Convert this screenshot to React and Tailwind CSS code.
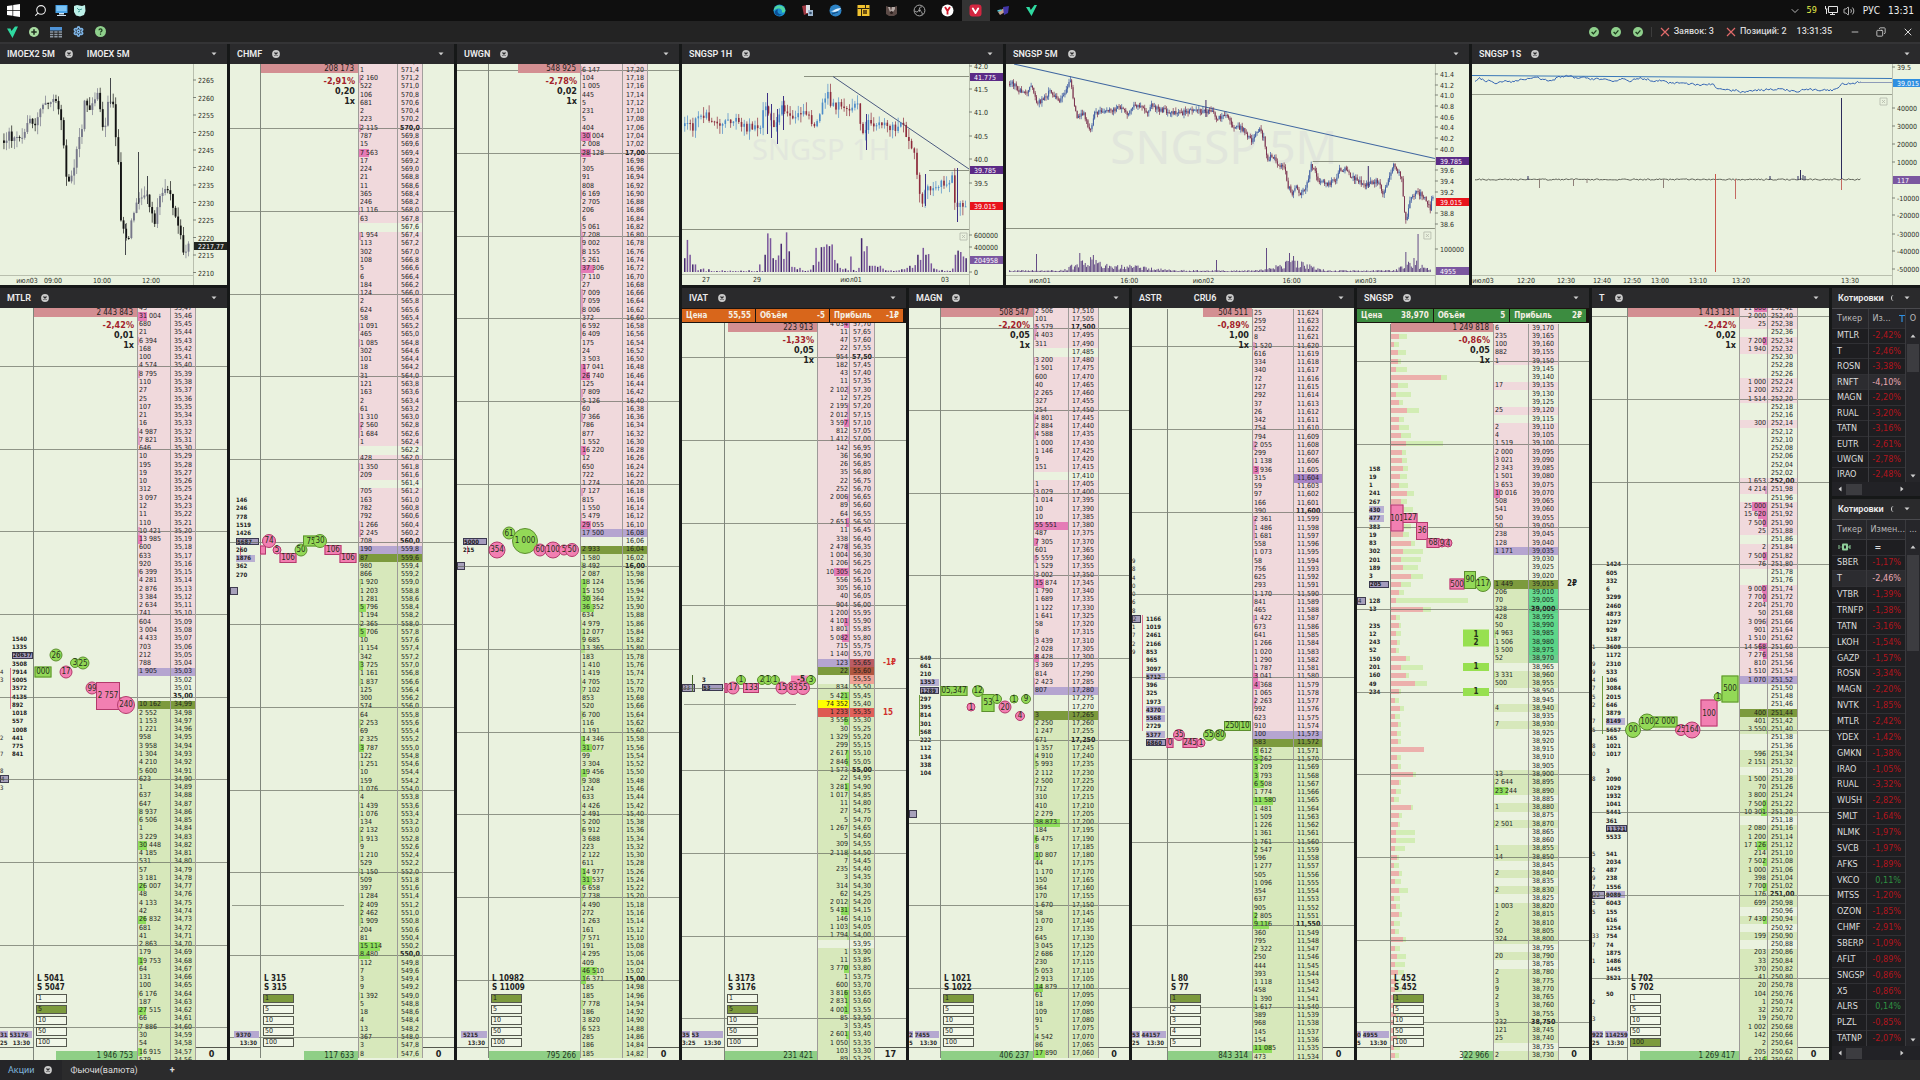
import React from "react";
import { Search, Settings, Volume2, Minus, X, ChevronDown, Copy } from "lucide-react";

const nums = (s) => s.trim().split(/\s+/).map(Number);
const words = (s) => s.trim().split(/\s+/).map((w) => (w === "_" ? "" : w));
const group = (v) => String(v).replace(/\B(?=(\d{3})+$)/g, " ");

/* ---------- order books ---------- */

const BOOKS = {
  mtlr: {
    tabs: [{ name: "MTLR", close: true }],
    cols: "grid-cols-[34px_minmax(0,1fr)_34px_25px_31px]",
    shift: "-mt-1 -mb-1",
    start: 35.47, step: 0.01, digits: 2, line: 10, bold: ["35,00"], ask: 44, bid: 48, full: 105000,
    top: "2 443 843", topW: 100, change: "-2,42%", tick: "0,01", total: "1 946 753", totalW: 79, pos: "0",
    long: "L 5041", short: "S 5047", sizes: ["1", "5", "10", "50", "100"], active: 1,
    volumes: nums(`43 31004 680 21 6394 168 100 4574 8795 110 27 25 107 21 16 4987 7821 646 10 195 19 10 312 3097 12 11 110 10421 13985 600 633 920 6399 4281 2876 3384 2634 741 604 3004 4433 703 212 788 1905 0 0 0 10162 2552 1153 1221 958 3958 1304 4210 5600 623 1 637 647 8937 6506 1 3229 30448 4185 531 57 3181 26007 48 4133 42 26832 681 41 2863 179 19753 64 131 100 6176 187 27515 66 7886 30 54 16915 579`),
    cluster: { at: 40, pad: "pl-3", main: 2, tint: [], line: [4, 8, "bg-[#e0708f]"], values: words("1540 1335 20637 3508 7914 5005 3572 4135 892 1018 557 1008 441 775 841") },
    edge: { 44: "4", 45: "3", 52: "2", 54: "7", 56: "8", 57: "#4", 58: "3" },
    foot: ["31", "53176", "25", "13:30"],
    bubbles: [["r", 44, 9, 17, 11, "000", 1], ["c", 42, 22, 13, 13, "26", 1], ["c", 44, 32, 13, 13, "17", 0], ["c", 43, 41, 10, 10, "3", 1], ["c", 43, 49, 13, 13, "25", 1], ["c", 46, 58, 13, 13, "99", 0], ["r", 47, 74, 24, 28, "2 757", 0], ["c", 48, 92, 18, 18, "240", 0]],
  },
  chmf: {
    tabs: [{ name: "CHMF", close: true }],
    cols: "grid-cols-[31px_minmax(0,1fr)_40px_25px_31px]",
    shift: "-mt-1.5 mb-0.5",
    start: 571.6, step: 0.2, digits: 1, line: 10, bold: ["570,0", "560,0", "550,0"], ask: 59, bid: 60, full: 27500,
    top: "208 173", topW: 100, change: "-2,91%", tick: "0,20", total: "117 633", totalW: 56, pos: "0",
    long: "L 315", short: "S 315", sizes: ["1", "5", "10", "50", "100"], active: 0,
    volumes: nums(`6 1 2160 522 106 681 2 223 2115 787 15 7563 17 224 21 11 365 246 1116 63 0 1954 113 302 108 5 6 184 124 2 624 58 1091 465 1085 302 101 18 31 121 163 2 61 1310 2560 1684 1 0 428 1350 209 0 705 163 782 792 1266 2245 708 190 87 980 866 1920 1203 1281 5796 1194 2365 5706 10 1154 342 3725 1161 1837 125 300 574 64 2253 69 2325 3787 122 1251 10 159 1076 4 1439 1076 134 2132 1913 9 1210 529 1150 509 397 1284 2409 2462 1909 204 81 15114 8480 112 7 3 9 1392 5 18 4 13 367 3 8`),
    cluster: { at: 53, pad: "pl-1.5", main: 5, tint: [7], line: [6, 7, "bg-[#e0708f]"], values: words("146 246 778 1519 1426 5687 260 1876 362 270") },
    edge: { 64: "#" },
    foot: ["", "9370", "", "13:30"], hover: 102,
    bubbles: [["r", 59, 2, 6, 9, "", 0], ["c", 58, 8, 14, 14, "74", 0], ["c", 59, 16, 9, 9, "5", 0], ["r", 60, 27, 17, 10, "106", 0], ["c", 59, 40, 13, 13, "50", 1], ["r", 58, 50, 16, 11, "75", 1], ["c", 58, 59, 14, 14, "30", 1], ["r", 59, 72, 17, 10, "106", 0], ["r", 60, 87, 17, 10, "106", 0]],
  },
  uwgn: {
    tabs: [{ name: "UWGN", close: true }],
    cols: "grid-cols-[32px_minmax(0,1fr)_43px_25px_31px]",
    shift: "-mt-1.5 mb-0.5",
    start: 17.22, step: 0.02, digits: 2, line: 10, bold: ["17,00", "16,00", "15,00"], ask: 57, bid: 59, full: 115000,
    top: "548 925", topW: 68, change: "-2,78%", tick: "0,02", total: "795 266", totalW: 100, pos: "0",
    long: "L 10982", short: "S 11009", sizes: ["1", "5", "10", "50", "100"], active: 0,
    volumes: nums(`6 6147 104 1005 445 5 231 5 404 30004 2008 28128 7 305 91 808 6169 2705 206 6 5061 7208 9002 8155 5261 37306 7110 27 7009 7059 8006 372 6592 6409 175 24 3503 17041 26740 125 7809 5126 60 7366 786 877 1552 16220 12 650 722 1274 7127 815 1550 5479 29055 17500 0 2933 1580 8492 2087 18124 15150 30364 36352 634 4979 12077 9685 13365 183 1410 1419 4705 7102 853 520 6700 116 1191 14346 31077 99 3304 19456 9308 124 633 4426 2491 5200 6912 3688 223 2122 611 14977 31537 6658 7738 4490 272 1263 161 7571 191 4295 409 46510 16371 185 185 7778 186 3820 6523 285 186 185`),
    cluster: { at: 58, pad: "pl-1.5", main: 0, tint: [], line: [1, 1, "bg-[#e0708f]"], values: words("5000 215") },
    edge: { 61: "#" },
    foot: ["", "5215", "", "13:30"],
    bubbles: [["c", 59, 8, 17, 17, "354", 0], ["c", 57, 20, 13, 13, "61", 1], ["c", 58, 36, 26, 26, "1 000", 1], ["c", 59, 51, 13, 13, "60", 0], ["c", 59, 64, 17, 17, "100", 0], ["c", 59, 75, 11, 11, "5", 0], ["c", 59, 83, 14, 14, "50", 0]],
  },
  ivat: {
    tabs: [{ name: "IVAT", close: true }],
    cols: "grid-cols-[43px_minmax(0,1fr)_33px_25px_31px]",
    shift: "-mt-[3px] -mb-1", right: true,
    order: { tone: "bg-[#d8661b]", price: "55,55", size: "-5", gain: "-1₽" },
    start: 57.7, step: 0.05, digits: 2, line: 10, bold: ["57,50", "55,00"], ask: 41, bid: 42, full: 21000,
    top: "223 913", topW: 97, change: "-1,33%", tick: "0,05", total: "231 421", totalW: 100, pos: "17",
    long: "L 3173", short: "S 3176", sizes: ["1", "5", "10", "50", "100"], active: 1,
    volumes: nums(`4034 11 47 22 954 182 43 11 2102 12 2195 2012 3597 812 1412 142 36 26 35 22 252 2006 89 64 2651 11 338 2478 1004 1206 10305 556 305 40 904 1200 4101 1801 5082 715 1140 123 22 0 834 5421 74352 1233 3556 30 1329 299 2617 2846 1573 22 3281 1017 11 27 5 1267 5 309 2118 7 235 3 314 62 2012 5431 146 1103 1794 0 1 11 3770 1 600 3816 2831 4001 85 3 2601 1050 103 89`),
    paint: { 41: ["", "bg-[#bb5c64]"], 42: ["", "bg-[#b0563f]"], 43: ["", "bg-[#efa396]"], 46: ["bg-[#ffff00]", ""], 47: ["bg-[#de5a52]", "bg-[#e0605a]"] },
    side: { 41: "-1₽", 47: "15" },
    cluster: { at: 43, pad: "pl-5", main: 1, tint: [], line: [0, 1, "bg-[#4b6b2f]"], values: words("3 53") },
    edge: { 44: "#33" }, hover: 46,
    foot: ["35", "53", "3:25", "13:30"],
    bubbles: [["c", 43, 16, 10, 10, "1", 1], ["c", 43, 37, 10, 10, "2", 1], ["c", 43, 43, 10, 10, "1", 1], ["c", 43, 50, 10, 10, "1", 1], ["f", 43, 76, 20, 9, "-5", 0], ["c", 43, 86, 10, 10, "3", 1], ["r", 44, 1, 3, 10, "", 0], ["c", 44, 8, 13, 13, "17", 0], ["r", 44, 26, 16, 10, "133", 0], ["c", 44, 57, 13, 13, "15", 0], ["c", 44, 68, 14, 14, "83", 0], ["c", 44, 78, 14, 14, "55", 0]],
  },
  magn: {
    tabs: [{ name: "MAGN", close: true }],
    cols: "grid-cols-[32px_minmax(0,1fr)_36px_30px_30px]",
    shift: "-mt-px mb-0.5",
    start: 17.51, step: 0.005, digits: 3, line: 10, bold: ["17,500", "17,250"], ask: 46, bid: 49, full: 52000,
    top: "508 547", topW: 100, change: "-2,20%", tick: "0,05", total: "406 237", totalW: 100, pos: "0",
    long: "L 1021", short: "S 1022", sizes: ["1", "5", "10", "50", "100"], active: 0,
    volumes: nums(`2506 101 5579 4403 311 0 3200 1501 600 40 2265 327 254 4801 2884 4588 1000 1146 9 151 0 1 3029 1014 10 10 55551 487 7305 601 5559 1529 3002 15874 1790 1689 1122 1641 58 8 3439 2028 8428 3369 814 2423 807 0 0 3 2250 1247 671 1357 4910 5993 2112 2500 712 310 410 2279 38873 184 6475 8 10807 44 1170 150 364 170 1670 58 1070 23 645 3045 2686 230 5053 2913 14879 61 18 109 91 5 4542 86 17890`),
    cluster: { at: 42, pad: "pl-[11px]", main: 4, tint: [3], line: [5, 9, "bg-[#6c9a3c]"], values: words("549 661 210 1353 1289 297 395 814 301 568 222 112 134 338 104") },
    edge: { 61: "#" },
    foot: ["2", "7455", "5", "13:30"],
    bubbles: [["r", 46, 13, 27, 10, "05,347", 1], ["c", 46, 37, 12, 12, "12", 1], ["c", 48, 30, 9, 9, "1", 0], ["r", 47.5, 47, 13, 18, "53", 1], ["c", 47, 56, 10, 10, "1", 1], ["c", 48, 64, 13, 13, "20", 0], ["c", 47, 73, 9, 9, "1", 1], ["c", 49, 79, 10, 10, "4", 0], ["c", 47, 85, 10, 10, "9", 1]],
  },
  cru6: {
    tabs: [{ name: "ASTR", wide: true }, { name: "CRU6", close: true }],
    cols: "grid-cols-[36px_minmax(0,1fr)_42px_29px_31px]",
    shift: "mt-px -mb-px",
    start: 11.624, step: 0.001, digits: 3, line: 10, bold: ["11,600", "11,550"], ask: 51, bid: 52, full: 23000,
    top: "504 511", topW: 58, change: "-0,89%", tick: "1,00", total: "843 314", totalW: 100, pos: "0",
    long: "L 80", short: "S 77", sizes: ["1", "2", "3", "4", "5"], active: 0,
    volumes: nums(`25 259 252 8 1520 616 334 340 72 127 292 37 26 342 754 794 2055 299 1138 3936 315 59 97 166 390 2361 1486 1681 558 1073 58 756 625 293 1170 841 465 1422 673 641 1266 1020 1290 1787 3041 4368 1065 2263 992 623 910 100 583 3612 5262 3209 3793 6508 1774 11580 1481 1509 1226 1361 1761 2547 596 1277 505 1096 354 637 905 2805 9116 360 795 2322 250 444 393 1118 458 1390 1617 389 968 145 154 11085 473`),
    paint: { 20: ["", "bg-[#a883c6]"] },
    cluster: { at: 37, pad: "pl-[14px]", main: 15, tint: [7, 11, 12, 14], line: [0, 13, "bg-[#e0708f]"], values: words("1166 1019 2461 2166 853 965 3097 5712 396 325 1973 4370 5568 2729 5377 6860") },
    edge: { 30: "9", 31: "8", 32: "4", 33: "0", 34: "0", 35: "6", 36: "8", 37: "#2", 38: "1", 39: "7", 40: "2", 41: "9" },
    foot: ["53", "44157", "25", "13:30"],
    bubbles: [["r", 52, 2, 7, 10, "0", 0], ["c", 51, 11, 12, 12, "35", 0], ["r", 52, 22, 15, 10, "245", 0], ["c", 52, 33, 9, 9, "1", 0], ["c", 51, 41, 12, 12, "55", 1], ["c", 51, 52, 12, 12, "80", 1], ["r", 50, 64, 16, 10, "250", 1], ["r", 50, 77, 12, 10, "10", 1]],
  },
  sngsp: {
    tabs: [{ name: "SNGSP", close: true }],
    cols: "grid-cols-[34px_minmax(0,1fr)_36px_30px_30px]",
    shift: "mt-px",
    order: { tone: "bg-[#3c8c40]", price: "38,970", size: "5", gain: "2₽" },
    start: 39.17, step: 0.005, digits: 3, line: 10, bold: ["39,000", "38,750"], ask: 27, bid: 31, full: 55000,
    top: "1 249 818", topW: 100, change: "-0,86%", tick: "0,05", total: "322 966", totalW: 75, pos: "0", clip: true,
    long: "L 452", short: "S 452", sizes: ["1", "5", "10", "50", "100"], active: 0,
    volumes: nums(`6 235 100 882 1 0 0 17 0 0 25 0 2 4 1519 2000 3021 2343 1501 3653 10016 508 541 50 50 238 128 1171 0 0 0 1449 206 70 328 428 50 4963 1506 3500 52 0 3331 500 0 0 4 0 7 0 0 0 0 0 13 2644 23244 0 1 0 2501 0 0 1 14 0 2 0 2 0 1003 2 2 50 324 0 20 0 2 3 9 2 3 3 232 121 25 0 2`),
    paint: { 32: ["", "bg-[#66d98f]"], 33: ["", "bg-[#62d98c]"], 34: ["", "bg-[#5fcf88]"], 35: ["", "bg-[#62d98c]"], 36: ["", "bg-[#5fd98b]"], 37: ["", "bg-[#5ed68a]"], 38: ["", "bg-[#5cd488]"], 39: ["", "bg-[#5cd487]"], 40: ["", "bg-[#6fce8e]"] },
    side: { 31: "2₽" },
    cluster: { at: 17, pad: "pl-3", main: 14, tint: [5, 6], line: null, values: words("158 19 1 241 267 430 477 383 19 83 302 201 189 3 205 _ 128 13 _ 235 12 243 52 150 201 160 49 234") },
    edge: { 33: "#4" },
    foot: ["0", "4955", "5", "13:30"],
    profile: [nums(`60 8 3 7 7 5 50 7 5 8 16 8 8 10 15 11 11 12 9 8 16 10 10 12 11 12 20 12 10 12 20 10 8 5 32 5 8 5 6 5 15 10 15 24 8 4 9 4 7 6 7 33 6 7 22 8 5 3 20 8 7 5 5 4 6 3 8 4 8 3 5 8 3 4 12 4 6 4 7 5 4 6 3 5 7 4 6 3 4`), nums(`0 8 5 8 3 11 6 10 15 4 12 5 10 10 37 4 5 5 7 9 7 6 12 8 9 6 4 20 20 15 12 10 5 72 8 4 2 5 3 3 4 22 3 12 2 4 4 5 3 4 3 0 4 3 3 2 5 5 2 3 2 19 19 10 2 5 3 6 9 6 4 3 6 4 3 5 9 10 6 5 7 4 6 3 5 7 3 6 4`)],
    bubbles: [["r", 23, 6, 13, 27, "101", 0], ["r", 23, 19, 15, 10, "127", 0], ["r", 24.5, 31, 12, 18, "36", 0], ["r", 26, 42, 13, 10, "68", 0], ["c", 26, 51, 9, 9, "9", 0], ["c", 26, 57, 9, 9, "4", 0], ["r", 31, 66, 15, 11, "500", 0], ["r", 30.5, 79, 12, 18, "90", 1], ["c", 31, 92, 16, 16, "117", 1], ["f", 37, 85, 26, 9, "1", 1], ["f", 38, 85, 26, 9, "2", 1], ["f", 41, 85, 26, 8, "1", 1], ["f", 44, 85, 26, 8, "1", 1]],
  },
  t: {
    tabs: [{ name: "T", close: true }],
    cols: "grid-cols-[36px_minmax(0,1fr)_29px_30px_31px]",
    shift: "-mt-1 -mb-[5px]", right: true,
    start: 252.42, step: 0.02, digits: 2, line: 10, bold: ["252,00", "251,00"], ask: 45, bid: 49, full: 45000,
    top: "1 413 131", topW: 100, change: "-2,42%", tick: "0,02", total: "1 269 417", totalW: 89, pos: "0",
    long: "L 702", short: "S 702", sizes: ["1", "5", "10", "50", "100"], active: 4,
    volumes: nums(`21000 2000 25 0 7200 1940 0 0 0 1000 1200 1514 0 0 300 0 0 0 0 0 0 1653 4214 0 25000 15620 7500 25 0 2 7500 76 0 0 9000 7700 2204 50 3096 901 1510 14568 7276 810 1510 1070 0 0 0 400 401 3550 0 0 596 2151 0 1500 70 3800 7500 10301 0 2080 1200 17126 214 7502 1000 398 7700 176 699 0 7430 0 199 0 203 33 370 41 20 104 1 32 19 1002 142 2 205 6216`),
    cluster: { at: 31, pad: "pl-[14px]", main: 32, tint: [19, 40], line: [14, 20, "bg-[#6c9a3c]"], values: words("1424 605 332 6 3299 2460 4873 1297 929 5187 3609 1172 2310 533 106 3084 2015 646 3879 8149 5657 165 1021 1017 _ 3 2090 1029 1932 1041 5441 361 11321 5533 _ 541 2034 487 238 1556 9089 6043 155 616 1254 754 74 1875 1486 1445 3521 _ 50") },
    edge: { 41: "1", 43: "9", 44: "9", 45: "4", 46: "7", 47: "5", 48: "2", 50: "7", 51: "5", 53: "8", 54: "0", 57: "8", 66: "5", 68: "2", 69: "9", 70: "7", 71: "#22", 72: "5", 73: "5", 76: "33", 77: "7", 79: "1", 84: "2", 86: "3" },
    foot: ["922", "114259", "25", "13:30"],
    bubbles: [["c", 51, 5, 16, 16, "00", 1], ["r", 50, 37, 25, 11, "2 000", 1], ["c", 50, 19, 17, 17, "100", 1], ["c", 51, 53, 12, 12, "25", 0], ["c", 51, 64, 17, 17, "164", 0], ["r", 49, 81, 17, 27, "100", 0], ["c", 47, 90, 9, 9, "1", 1], ["r", 46, 102, 17, 27, "500", 1]],
  },
};

function CloseTab({ name }) {
  return (
    <button type="button" aria-label={`Закрыть ${name}`} className="grid size-2 shrink-0 place-items-center">
      <svg viewBox="0 0 8 8" className="size-2">
        <circle cx="4" cy="4" r="3.9" fill="#c9c9c9" />
        <path d="M2.5 2.5l3 3M5.5 2.5l-3 3" stroke="#2a2a2c" strokeWidth="1.2" />
      </svg>
    </button>
  );
}

function TabStrip({ tabs }) {
  return (
    <header className="flex h-5 shrink-0 items-center bg-[#2a2a2c] pr-2.5 pl-[7px] text-[#ececec]">
      {tabs.map((t) => (
        <div key={t.name} className={`flex items-center gap-2.5 ${t.wide ? "mr-8" : "mr-3.5"}`}>
          <button type="button" className="font-['Roboto','Open_Sans',sans-serif] text-[9px] leading-none font-semibold whitespace-nowrap">{t.name}</button>
          {t.close && <CloseTab name={t.name} />}
        </div>
      ))}
      <button type="button" aria-label="Меню панели" className="ml-auto">
        <svg viewBox="0 0 6 4" className="h-1 w-1.5"><path d="M0.5 0.5h5L3 3.2z" fill="#cfcfcf" /></svg>
      </button>
    </header>
  );
}

function OrderStrip({ order }) {
  const cells = [["Цена", order.price], ["Объём", order.size], ["Прибыль", order.gain]];
  return (
    <div className="flex shrink-0 bg-[#1c1510] py-px pr-0.5">
      {cells.map(([k, v]) => (
        <div key={k} className={`mr-px flex h-[13px] min-w-0 flex-1 items-center justify-between px-1 text-[8px] leading-none font-bold text-[#f5efe4] ${order.tone}`}>
          <span>{k}</span>
          <span>{v}</span>
        </div>
      ))}
    </div>
  );
}

function Bubble({ data, count }) {
  const [kind, row, x, w, h, text, up] = data;
  const shape = kind === "c" ? "rounded-full border" : kind === "r" ? "border" : "font-bold";
  const tone = up
    ? kind === "f" ? "bg-[#97e050]" : "border-[#5c8f2e] bg-[#93d957]"
    : kind === "f" ? "bg-[#f587b5]" : "border-[#b33a6c] bg-[#f27fb2]";
  return (
    <span
      className={`absolute flex -translate-x-1/2 -translate-y-1/2 items-center justify-center text-[8px] leading-none whitespace-nowrap text-[#26301c] ${shape} ${tone}`}
      style={{ left: x, top: `${((row + 0.5) / count) * 100}%`, width: w, height: h }}
    >
      {text}
    </span>
  );
}

function rowTone(book, i, v) {
  if (i === book.ask) return "bg-[#b5a5d0]";
  if (i === book.bid) return "bg-[#7c9a3d]";
  if (!v) return "";
  return i < book.ask ? "bg-[#f0d9dc]" : "bg-[#d7e8bb]";
}

function Row({ book, i, v }) {
  const price = (book.start - i * book.step).toFixed(book.digits).replace(".", ",");
  const ticks = Math.round((book.start - i * book.step) / book.step);
  const tone = rowTone(book, i, v);
  const paint = (book.paint && book.paint[i]) || ["", ""];
  const c = book.cluster;
  const k = i - c.at;
  const cv = c.values[k];
  const edge = book.edge[i];
  const bold = book.bold.includes(price);
  const special = i === book.ask || i === book.bid || paint[0];
  const size = Math.min(100, (v / book.full) * 100);
  const barTone = i < book.ask ? (size > 12 ? "bg-[#e57bb6]" : "bg-[#dfa0c6]") : size > 12 ? "bg-[#8fde5c]" : "bg-[#b4e08c]";
  const side = book.side && book.side[i];
  return (
    <div className={`relative grid min-h-0 flex-1 text-[7px] leading-none text-[#1c1c1c] ${book.cols}`}>
      <div className="relative flex items-center">
        {edge !== undefined && (
          <span className={`absolute left-0 text-[6px] ${edge[0] === "#" ? "border border-[#3f3c50] bg-[#a7a1bb] pr-1 text-[#2b2b2b]" : ""}`}>{edge.replace("#", "") || "\u00a0"}</span>
        )}
        {c.line && k >= c.line[0] && k <= c.line[1] && <span className={`absolute inset-y-0 left-2.5 w-px ${c.line[2]}`} />}
        {cv !== undefined && cv !== "" && (
          <span className={`relative flex h-full flex-1 items-center text-[6px] font-semibold ${c.pad}`}>
            <span className={`flex h-[7px] items-center ${k === c.main ? "mr-0.5 flex-1 border border-[#3b3950] bg-[#a49bbd]" : c.tint.includes(k) ? "bg-[#b9b0d2] pr-1" : ""}`}>{cv}</span>
          </span>
        )}
      </div>
      <div className="relative">
        {book.profile && (
          <div className="flex h-full items-center">
            <span className="h-[5px] bg-[#ecb0ac]" style={{ width: book.profile[0][i] }} />
            <span className="h-[5px] bg-[#d2edb4]" style={{ width: book.profile[1][i] }} />
          </div>
        )}
      </div>
      <div className={`relative flex items-center overflow-hidden px-0.5 ${book.right ? "justify-end" : ""} ${paint[0] || tone}`}>
        {!special && v > 0 && <span className={`absolute inset-y-0 ${book.right ? "right-0" : "left-0"} ${barTone}`} style={{ width: `${size}%` }} />}
        <span className="relative whitespace-nowrap">{v ? group(v) : ""}</span>
      </div>
      <div className={`flex items-center whitespace-nowrap ${bold ? "pl-0.5 font-bold" : "pl-[3px]"} ${paint[1] || tone}`}>{price}</div>
      <div className={`flex items-center pl-2 text-[8px] font-bold ${book.right ? "text-[#d0302c]" : ""}`}>{side}</div>
      {ticks % book.line === 0 && <span className="absolute inset-x-0 top-1/2 h-px bg-[#5d6257]/65" />}
      {book.hover === i && <span className="absolute top-1/2 left-0.5 h-px w-1/2 bg-[#5d6257]/60" />}
    </div>
  );
}

function Sizes({ book }) {
  return (
    <div className="ml-0.5 flex w-[31px] flex-col">
      <p className="pl-px text-[8px] leading-[9px] font-bold whitespace-nowrap text-[#222]">{book.long}</p>
      <p className="mb-0.5 pl-px text-[8px] leading-[9px] font-bold whitespace-nowrap text-[#222]">{book.short}</p>
      <div className="flex flex-col gap-0.5">
        {book.sizes.map((s, n) => (
          <button key={s} type="button" className={`flex h-[9px] items-center border border-[#55584e] pl-px text-left text-[7px] leading-none text-[#1c1c1c] ${n === book.active ? "bg-[#7c9a3d]" : "bg-[#f1f7e8]"}`}>{s}</button>
        ))}
      </div>
    </div>
  );
}

function Book({ book }) {
  const n = book.volumes.length;
  const strip = book.order;
  return (
    <section className="flex min-h-0 min-w-0 flex-col overflow-hidden">
      <TabStrip tabs={book.tabs} />
      {strip && <OrderStrip order={strip} />}
      <div className="relative flex min-h-0 flex-1 flex-col overflow-hidden bg-[#eaf2df]">
        <div className={`relative flex min-h-0 flex-1 flex-col ${book.shift}`}>
          {book.volumes.map((v, i) => <Row key={i} book={book} i={i} v={v} />)}
          <div className={`pointer-events-none absolute inset-0 grid ${book.cols}`}>
            <div className="border-r border-[#7e857a]" />
            <div className="relative">{book.bubbles.map((b, k) => <Bubble key={k} data={b} count={n} />)}</div>
            <div className="border-x border-[#9d9a98]" />
            <div className="border-r border-[#a39f9d]" />
          </div>
        </div>
        <div className={`absolute inset-0 grid ${book.cols}`}>
          <div className="flex min-w-0 flex-col justify-end overflow-hidden text-[6px] leading-[7px] font-semibold text-[#2b2b2b]">
            <div className="mr-0.5 flex gap-0.5">
              {book.foot[0] && <span className="bg-[#b5a8d0]">{book.foot[0]}</span>}
              <span className={`flex-1 bg-[#b5a8d0] ${book.foot[0] ? "" : "ml-1 pl-0.5"}`}>{book.foot[1]}</span>
            </div>
            <div className="mt-px mr-1 flex justify-between"><span>{book.foot[2]}</span><span>{book.foot[3]}</span></div>
            <div className="mt-px h-[13px] border-t border-[#6a6e64]" />
          </div>
          <div className="flex min-w-0 flex-col justify-between">
            <div className="flex flex-col items-end leading-none text-[#222]">
              <div className="flex h-[9px] items-center justify-end bg-[#d38f92] pr-1 text-[8px]" style={{ width: `${book.topW}%` }}>{book.top}</div>
              <span className="mt-[3px] pr-[3px] text-[9px] leading-[10px] font-bold text-[#a3232b]">{book.change}</span>
              <span className="pr-[3px] text-[9px] leading-[10px] font-bold">{book.tick}</span>
              <span className="pr-[3px] text-[9px] leading-[10px] font-bold">1x</span>
            </div>
            <div className="flex flex-col gap-1">
              <Sizes book={book} />
              <div className={`flex h-[9px] items-center justify-end self-end pr-1 text-[8px] leading-none text-[#22361f] ${book.clip ? "bg-linear-to-r from-[#8fcf86]/0 from-60% to-[#8fcf86] to-60%" : "bg-[#8fcf86]"}`} style={{ width: `${book.totalW}%` }}>{book.total}</div>
            </div>
          </div>
          <div />
          <div />
          <div className="flex flex-col justify-end">
            <div className="h-[13px] border-t border-[#55584e] text-center text-[9px] leading-3 font-bold text-[#222]">{book.pos}</div>
          </div>
        </div>
      </div>
    </section>
  );
}

/* ---------- charts ---------- */

const noise = (i) => {
  const s = Math.sin(i * 127.1 + 11.7) * 43758.5453;
  return s - Math.floor(s);
};

const pairs = (s) => s.trim().split(/\s+/).map((p) => p.split(",").map(Number));

function sampler(points) {
  return (x) => {
    const i = points.findIndex((p) => p[0] >= x);
    if (i <= 0) return points[i === 0 ? 0 : points.length - 1][1];
    const [x0, y0] = points[i - 1];
    const [x1, y1] = points[i];
    return y0 + ((y1 - y0) * (x - x0)) / (x1 - x0);
  };
}

function Candles({ points, step, width, jitter, wick, up, down }) {
  const at = sampler(points);
  const out = [];
  const end = points[points.length - 1][0];
  for (let x = points[0][0], i = 0; x <= end; x += step, i++) {
    const a = at(x) + (noise(i) - 0.5) * jitter;
    const b = at(x + step) + (noise(i + 1) - 0.5) * jitter;
    const fill = b > a ? down : up;
    out.push(
      <g key={i} fill={fill}>
        <rect x={x} y={Math.min(a, b)} width={width} height={Math.max(1, Math.abs(b - a))} />
        <rect x={x + width / 2 - 0.35} y={Math.min(a, b) - noise(i + 50) * wick} width="0.7" height={Math.abs(b - a) + (noise(i + 50) + noise(i + 90)) * wick} />
      </g>
    );
  }
  return <g>{out}</g>;
}

function Axis({ x, width, labels, tags, times, floor, height }) {
  return (
    <g fontSize="7" fill="#2a2d26" fontFamily="'DejaVu Sans Condensed','Noto Sans',sans-serif">
      <path d={`M${x + 0.5} 0V${height}M0 ${floor + 0.5}H${x}`} stroke="#b9bfae" strokeWidth="1" />
      {labels.map(([t, y]) => (
        <g key={t}>
          <path d={`M${x} ${y}h3`} stroke="#7d8276" />
          <text x={x + 5} y={y + 3}>{t}</text>
        </g>
      ))}
      {tags.map(([t, y, c]) => (
        <g key={t}>
          <rect x={x + 1} y={y - 4} width={width - x - 1} height="8" fill={c} />
          <text x={x + 5} y={y + 3} fill="#fff">{t}</text>
        </g>
      ))}
      {times.map(([t, tx]) => <text key={t + tx} x={tx} y={floor + 8} textAnchor="middle">{t}</text>)}
    </g>
  );
}

function ChartPanel({ tabs, width, children, label }) {
  return (
    <section className="flex min-h-0 min-w-0 flex-col overflow-hidden">
      <TabStrip tabs={tabs} />
      <div className="min-h-0 flex-1 bg-[#eaf2df]">
        <svg role="img" aria-label={label} viewBox={`0 0 ${width} 221`} preserveAspectRatio="none" className="block size-full">{children}</svg>
      </div>
    </section>
  );
}

const IMOEX = pairs("3,75 7,79 11,70 15,76 20,72 27,69 30,50 36,62 41,44 50,39 59,37 63,59 66,83 68,115 72,116 75,108 79,77 83,74 86,36 92,45 96,38 100,27 103,57 106,73 110,34 115,43 117,70 120,101 122,156 126,170 130,173 134,149 138,143 139,125 142,139 147,129 151,139 156,160 160,139 166,124 173,134 178,160 183,173 186,197 189,180");
const H1 = pairs("2,60 6,56 11,65 16,56 21,48 26,50 31,55 45,58 58,58 65,63 75,63 80,60 85,43 89,50 95,63 98,60 101,40 106,50 111,55 123,51 131,56 136,58 141,43 147,29 151,43 156,41 161,39 166,50 171,44 178,43 181,63 184,80 188,56 193,63 201,60 211,63 223,63 228,74 235,91 238,122 243,139 246,118 251,124 260,117 268,125 272,115 275,142 278,142 281,132 284,143");
const H1_VOL = nums("40 93 50 22 22 5 8 10 2 8 3 2 3 2 5 3 2 4 2 3 2 4 3 2 5 3 2 3 22 3 50 112 98 40 35 48 82 38 115 60 15 14 8 12 5 3 4 7 20 70 30 72 73 80 75 80 35 25 12 8 10 5 45 6 3 12 98 60 75 18 18 18 15 18 10 5 4 5 3 4 5 8 8 12 18 12 20 50 35 70 50 52 25 10 8 4 6 3 4 3 10 50 62 58 45 40");
const M5 = pairs("3,19 9,20 14,26 21,27 27,22 31,39 37,36 45,27 54,38 61,27 65,17 69,39 72,53 79,50 85,69 89,50 97,48 107,46 117,43 122,50 129,39 141,48 146,42 154,45 171,50 184,47 197,48 207,46 210,55 221,51 227,62 237,65 246,76 254,65 259,77 261,94 267,93 274,101 279,105 282,122 287,129 291,122 295,132 301,120 306,100 312,115 321,120 329,117 334,106 341,106 346,113 359,122 371,117 377,129 384,112 388,101 396,115 399,153 401,156 404,136 409,129 416,131 421,136 424,146 426,132");
const S1 = pairs("3,17 8,14 13,17 18,16 23,19 35,17 40,18 46,16 56,15 66,13 68,16 83,16 85,13 98,12 105,15 111,13 118,15 135,15 141,17 150,15 158,17 168,14 181,17 191,17 198,19 205,19 215,20 220,20 228,21 241,20 245,25 255,25 258,27 265,26 268,28 288,26 306,25 315,26 328,28 331,25 345,26 351,26 363,26 370,20 378,20 386,18 389,19");

function wiggle(points, step, amp) {
  const at = sampler(points);
  let d = "";
  const end = points[points.length - 1][0];
  for (let x = points[0][0], i = 0; x <= end; x += step, i++) d += `${i ? "L" : "M"}${x} ${(at(x) + (noise(i) - 0.5) * amp).toFixed(1)}`;
  return d;
}

function CloseBox({ x, y }) {
  return <path d={`M${x} ${y}h7v7h-7zM${x + 2} ${y + 2}l3 3m0-3l-3 3`} fill="none" stroke="#b3b8aa" strokeWidth="0.8" />;
}

function ImoexChart() {
  return (
    <ChartPanel width={227} label="IMOEX2 5M" tabs={[{ name: "IMOEX2 5M", close: true }, { name: "IMOEX 5M" }]}>
      <Axis x={193} width={227} floor={211} height={221}
        labels={Array.from({ length: 12 }, (_, i) => [String(2265 - 5 * i), 16 + 17.5 * i])}
        tags={[["2217,77", 182, "#22261f"]]}
        times={[["июл03", 27], ["09:00", 53], ["10:00", 102], ["12:00", 151]]} />
      <Candles points={IMOEX} step={2.6} width={1.9} jitter={7} wick={10} up="#77788a" down="#141414" />
      <path d="M138.500 88V140M110.500 14V40M147.500 112V140M125.500 160V191" stroke="#44464a" />
    </ChartPanel>
  );
}

function HourChart() {
  return (
    <ChartPanel width={321} label="SNGSP 1H" tabs={[{ name: "SNGSP 1H", close: true }]}>
      <text x="70" y="96" fontSize="29" fill="#e2e7dd" fontFamily="'Noto Sans',sans-serif">SNGSP 1H</text>
      <path d="M0 165.500H287M122 12.500H287M247 106.500H287" stroke="#8b9180" strokeWidth="1" />
      <path d="M151 12.500L287 105" stroke="#4b5a80" strokeWidth="1" fill="none" />
      <Candles points={H1} step={2.7} width={1.6} jitter={10} wick={9} up="#4d8cc9" down="#8e2c3c" />
      <path d="M85.500 29V70M89.500 40V74M95.500 45V80M101.500 32V66M184.500 50V86M243.500 110V142M275.500 104V158" stroke="#3c2f86" />
      {H1_VOL.map((h, i) => <rect key={i} x={2 + i * 2.68} y={208 - h / 2.9} width="1.5" height={h / 2.9} fill={i % 3 ? "#7a569c" : "#46286f"} />)}
      <CloseBox x={278} y={169} />
      <Axis x={287} width={321} floor={210} height={221}
        labels={[["42.0", 2], ["41.5", 25], ["41.0", 48], ["40.5", 72], ["40.0", 95], ["39.5", 119], ["600000", 171], ["400000", 183], ["0", 208]]}
        tags={[["41.775", 13, "#5b2a86"], ["39.785", 106, "#5b2a86"], ["39.015", 142, "#e8141c"], ["204958", 196, "#7b57a0"]]}
        times={[["27", 24], ["29", 75], ["июл01", 169], ["03", 263]]} />
    </ChartPanel>
  );
}

function FiveChart() {
  const spikes = { 20: 18, 52: 19, 62: 17, 153: 12, 190: 24, 207: 19, 210: 16, 293: 20, 299: 14, 302: 38, 313: 18, 315: 12 };
  return (
    <ChartPanel width={462} label="SNGSP 5M" tabs={[{ name: "SNGSP 5M", close: true }]}>
      <text x="104" y="100" fontSize="46" fill="#e1e6dc" fontFamily="'Noto Sans',sans-serif">SNGSP 5M</text>
      <path d="M0 164.500H428M306 97.500H428" stroke="#8b9180" strokeWidth="1" />
      <path d="M8 0L428 94.500" stroke="#3f66a0" strokeWidth="1" />
      <Candles points={M5} step={1.35} width={0.9} jitter={5} wick={4} up="#3b58a0" down="#7a2f4d" />
      <path d="M199.500 36V53M361.500 102V124" stroke="#3c2a6a" />
      {Array.from({ length: 312 }, (_, i) => {
        const x = 3 + i * 1.35;
        const near = Math.exp(-(((x - 80) / 16) ** 2)) * 9 + Math.exp(-(((x - 287) / 20) ** 2)) * 8 + Math.exp(-(((x - 405) / 12) ** 2)) * 8 + Math.exp(-(((x - 120) / 30) ** 2)) * 4 + 1.4;
        const h = spikes[i] || near * (0.4 + noise(i + 300));
        return <rect key={i} x={x} y={208 - h} width="0.9" height={h} fill="#56397c" />;
      })}
      <CloseBox x={417} y={168} />
      <Axis x={428} width={462} floor={211} height={221}
        labels={[["41.4", 10], ["41.2", 21], ["41.0", 31], ["40.8", 42], ["40.6", 53], ["40.4", 63], ["40.2", 74], ["40.0", 85], ["39.6", 106], ["39.4", 117], ["39.2", 128], ["38.8", 149], ["38.6", 160], ["100000", 185]]}
        tags={[["39.785", 97, "#5b2a86"], ["39.015", 138, "#e8141c"], ["4955", 207, "#7b57a0"]]}
        times={[["июл01", 34], ["16:00", 123], ["июл02", 197], ["16:00", 285], ["июл03", 359]]} />
    </ChartPanel>
  );
}

function SecondChart() {
  return (
    <ChartPanel width={448} label="SNGSP 1S" tabs={[{ name: "SNGSP 1S", close: true }]}>
      <path d="M0 30.500H420" stroke="#9aa08f" />
      <path d="M0 11.500L420 14.500" stroke="#3a78b8" />
      <path d={wiggle(S1, 1.5, 2)} fill="none" stroke="#3566b4" />
      <path d="M387 18.500H420" stroke="#8d9bb8" />
      <path d={wiggle([[3, 115.5], [389, 115.5]], 1.5, 1.4)} fill="none" stroke="#55584e" strokeWidth="0.9" />
      <path d="M67.500 115V124M101.500 115V122M191.500 115V124M115 115V119" stroke="#8e7f78" />
      <path d="M243.500 110V208" stroke="#c8564c" />
      <path d="M263.500 115V135M369.500 115V126" stroke="#c46a62" />
      <path d="M369.500 34V115M328.500 106V116M326 112V116M331 111V116M333 112V116M298 112V116M56 112V116" stroke="#2d2c5c" />
      <CloseBox x={408} y={34} />
      <Axis x={420} width={448} floor={211} height={221}
        labels={[["39.5", 3], ["40000", 44], ["30000", 62], ["20000", 80], ["10000", 98], ["-10000", 134], ["-20000", 151], ["-30000", 170], ["-40000", 187], ["-50000", 205]]}
        tags={[["39.015", 19, "#2f8fe0"], ["117", 116, "#7b57a0"]]}
        times={[["июл03", 11], ["12:20", 54], ["12:30", 94], ["12:40", 130], ["12:50", 160], ["13:00", 188], ["13:10", 226], ["13:20", 269], ["13:30", 378]]} />
    </ChartPanel>
  );
}

/* ---------- quotes ---------- */

function quoteRows(s) {
  const w = s.split(" ");
  const out = [];
  for (let i = 0; i < w.length; i += 2) out.push([w[i], w[i + 1] + "%"]);
  return out;
}

const TOP_QUOTES = quoteRows("MTLR -2,42 T -2,46 ROSN -3,38 RNFT -4,10 MAGN -2,20 RUAL -3,20 TATN -3,16 EUTR -2,61 UWGN -2,78 IRAO -2,48");
const QUOTES = quoteRows("SBER -1,17 T -2,46 VTBR -1,39 TRNFP -1,38 TATN -3,16 LKOH -1,54 GAZP -1,57 ROSN -3,34 MAGN -2,20 NVTK -1,85 MTLR -2,42 YDEX -1,42 GMKN -1,38 IRAO -1,05 RUAL -3,32 WUSH -2,82 SMLT -1,64 NLMK -1,97 SVCB -1,97 AFKS -1,89 VKCO 0,11 MTSS -1,20 OZON -1,85 CHMF -2,91 SBERP -1,09 AFLT -0,89 SNGSP -0,86 X5 -0,86 ALRS 0,14 PLZL -0,85 TATNP -2,07");

function Quotes({ rows, second, last, marked, filter, thumb }) {
  return (
    <section className="flex min-h-0 min-w-0 flex-1 flex-col overflow-hidden bg-[#1e1e21] text-[#dedede]">
      <header className="flex h-5 shrink-0 items-center justify-between bg-[#2a2a2c] pr-2.5 pl-1.5">
        <h2 className="font-['Roboto','Open_Sans',sans-serif] text-[9px] leading-none font-semibold text-[#ececec]">Котировки</h2>
        <span className="size-1.5 rounded-full border-l border-[#cfcfcf]" />
        <svg viewBox="0 0 6 4" className="h-1 w-1.5"><path d="M0.5 0.5h5L3 3.2z" fill="#cfcfcf" /></svg>
      </header>
      <div className="flex min-h-0 flex-1 border-t border-[#4a4a4e]">
        <table className="h-full flex-1 border-collapse text-[9px] leading-none">
          <thead>
            <tr className="h-[19px] bg-[#26262a] text-[#b9b9b9]">
              <th className="w-9 border-r border-[#3a3a3e] pl-[5px] text-left font-normal">Тикер</th>
              <th className="border-r border-[#3a3a3e] pl-1 text-left font-normal whitespace-nowrap">
                {second}
                {!filter && <svg viewBox="0 0 6 7" className="ml-2 inline h-[7px] w-1.5"><path d="M0 .5h6M3 .5V7" stroke="#2f8fe0" strokeWidth="1.200" /></svg>}
              </th>
            </tr>
            {filter && (
              <tr className="h-4 border-t border-[#3a3a3e]">
                <th className="border-r border-[#3a3a3e] pl-1.5 text-left">
                  <svg viewBox="0 0 14 8" className="h-2 w-3.5"><path d="M1 2v4M13 3H11v2h2M2.500 4h1" stroke="#8fcf9a" fill="none" /><rect x="4" y="0.500" width="6" height="7" rx="1" fill="#8fcf9a" /><path d="M6 2.500h2v3H6z" fill="#1e1e21" /></svg>
                </th>
                <th className="border-r border-[#3a3a3e] pl-2 text-left font-bold">=</th>
              </tr>
            )}
          </thead>
          <tbody>
            {rows.map(([t, c], i) => (
              <tr key={t} className={`border-t border-[#303034] ${marked === i ? "bg-[#2c2c30]" : ""}`}>
                <td className="border-r border-[#3a3a3e] pl-[5px]">{t}</td>
                <td className={`border-r border-[#3a3a3e] pr-1 text-right ${marked === i ? "text-[#eba9b2]" : c[0] === "-" ? "text-[#b3141d]" : "text-[#2f9142]"}`}>{c}</td>
              </tr>
            ))}
          </tbody>
        </table>
        <div className="flex w-3.5 shrink-0 flex-col items-center justify-between bg-[#26262a] pb-1">
          <div className="flex flex-col items-center">
            <span className="flex h-[19px] items-center text-[9px] leading-none text-[#b9b9b9]">{last}</span>
            <svg viewBox="0 0 6 4" className="mt-1.5 mb-1.5 h-1 w-1.5"><path d="M0.500 3.500h5L3 0.500z" fill="#cfcfcf" /></svg>
            <span className={`w-3 bg-[#3c3c40] ${thumb}`} />
          </div>
          <svg viewBox="0 0 6 4" className="h-1 w-1.5"><path d="M0.500 0.500h5L3 3.500z" fill="#cfcfcf" /></svg>
        </div>
      </div>
      <div className="flex h-3.5 shrink-0 items-center gap-0.5 bg-[#222226] pr-4 pl-1.5">
        <svg viewBox="0 0 4 6" className="h-1.5 w-1"><path d="M3.500 0.500v5L0.500 3z" fill="#cfcfcf" /></svg>
        <span className="ml-0.5 h-[11px] w-4 bg-[#3c3c40]" />
        <svg viewBox="0 0 4 6" className="ml-auto h-1.5 w-1"><path d="M0.500 0.500v5L3.500 3z" fill="#cfcfcf" /></svg>
      </div>
    </section>
  );
}

/* ---------- bars ---------- */

function AppIcon({ kind }) {
  const art = {
    edge: (<><circle cx="6.500" cy="6.500" r="6" fill="#1b8fd0" /><path d="M1 5a6 6 0 0 1 11.400 1.200c0 2-1.800 2.600-3.600 2.200C9.800 6 7.500 4 4.500 4.600 2.500 5 1.200 6 .8 7z" fill="#4fd6a0" /><path d="M5 5.500c-1.500 2.500.5 5 4 4.800-1.500 1.800-5.500 2-7-.8C1.200 7.500 3 5.500 5 5.500z" fill="#0b4f96" /></>),
    phone: (<><path d="M1 2l5-1 2 8-5 2z" fill="#a23a44" /><rect x="5" y="1" width="4" height="8" fill="#dcdfe6" /><rect x="7" y="6" width="5" height="6" fill="#9fb7cf" /><circle cx="9.500" cy="9" r="1.300" fill="#35506e" /></>),
    globe: (<><circle cx="6.500" cy="6.500" r="6" fill="#2d83c6" /><path d="M1 7c3 1 5-3 11-3-2 3-5 4-7 4" fill="#dcefff" /><path d="M3 10c2-.5 5-2 6-2" stroke="#0e3f73" fill="none" /></>),
    grid: (<><rect x="0.500" y="1" width="12" height="11" fill="#f0c230" /><path d="M0.500 4.500h12M4.500 4.500v7.500M8.500 1v4" stroke="#2a2210" /><rect x="6" y="6" width="4" height="4" fill="#6b4d10" /></>),
    badger: (<><path d="M1 2l3 1h5l3-1v8l-3 2H4l-3-2z" fill="#5b4a46" /><path d="M3 3h2l1 4 1-4h3v2L8 8H5z" fill="#b6aaa6" /><circle cx="6.500" cy="8.500" r="1.500" fill="#2a1d1b" /></>),
    obs: (<><circle cx="6.500" cy="6.500" r="5.400" fill="none" stroke="#a8a8a8" /><circle cx="6.500" cy="6.500" r="1.300" fill="#a8a8a8" /><path d="M6.500 5c0-2 1.500-2.500 2.500-2M5 7.500c-1.500 1-3 .3-3.200-1M8 7.500c1.500 1 1.500 2.500.8 3.300" stroke="#a8a8a8" fill="none" /></>),
    yandex: (<><circle cx="6.500" cy="6.500" r="6" fill="#fff" /><path d="M4 3l2.500 4L9 3M6.500 7v3.500" stroke="#d3182a" strokeWidth="1.800" fill="none" /></>),
    vivaldi: (<><rect x="0.500" y="0.500" width="12" height="12" rx="3" fill="#d32640" /><path d="M3.800 4.500L6.500 9l2.700-4.500" stroke="#fff" strokeWidth="1.900" strokeLinecap="round" strokeLinejoin="round" fill="none" /></>),
    swoosh: (<><path d="M1 8l6-4 1 4-5 3z" fill="#c0a08a" /><path d="M6 3l6-1-1 7-4 2z" fill="#4236a8" /><path d="M0.500 7l4-1" stroke="#4fc7d8" strokeWidth="1.500" /></>),
    tick: (<path d="M1 3h3.500l1.300 3L9.500 1H12L6.500 12z" fill="#2fd9a0" />),
  };
  return <svg viewBox="0 0 13 13" className="size-[13px]">{art[kind]}</svg>;
}

const APPS = ["edge", "phone", "globe", "grid", "badger", "obs", "yandex", "vivaldi", "swoosh", "tick"];

function Taskbar() {
  return (
    <div className="flex h-[21px] shrink-0 items-center bg-[#0f0f0f] pr-1.5 text-[10px] leading-none text-[#ececec]">
      <div className="flex w-2/5 items-center pl-[7px]">
        <button type="button" aria-label="Пуск"><svg viewBox="0 0 13 13" className="size-[13px]" fill="#fff"><path d="M0 2l5.500-.8V6H0zM6.200 1.100L13 0v6H6.200zM0 6.800h5.500v4.900L0 11zM6.200 6.800H13V13l-6.800-1.100z" /></svg></button>
        <button type="button" aria-label="Поиск" className="ml-3.5"><Search className="size-[13px] -scale-x-100" strokeWidth={2} /></button>
        <button type="button" aria-label="Компьютер" className="ml-2"><svg viewBox="0 0 13 13" className="size-[13px]"><rect x="0.500" y="1" width="12" height="8" fill="#4aa3e8" /><rect x="1.500" y="2" width="10" height="5" fill="#7cc4f5" /><path d="M4 9h5v1.500H4zM2 11h9v1H2z" fill="#cfe3f2" /></svg></button>
        <button type="button" aria-label="Чат" className="ml-[5px]"><svg viewBox="0 0 13 13" className="size-[13px]"><path d="M1 2l3-1 5 1 3-1 .5 6-1.500 4-4 1.500-4-1L1 8z" fill="#bdf0e8" /><path d="M4 4l2 2 3-1M5 8l2-1" stroke="#3f9c94" fill="none" /></svg></button>
      </div>
      <div className="flex h-full items-stretch">
        {APPS.map((a) => (
          <button key={a} type="button" aria-label={a} className={`flex w-7 items-center justify-center ${a === "vivaldi" ? "bg-[#343434]" : ""}`}><AppIcon kind={a} /></button>
        ))}
      </div>
      <div className="ml-auto flex items-center">
        <ChevronDown className="size-3" strokeWidth={1.500} />
        <span className="ml-1.5 text-[9px] text-[#e8f04a]">59</span>
        <svg viewBox="0 0 14 11" className="ml-2 h-[11px] w-3.5" fill="none" stroke="#e4e4e4"><path d="M3.500 1.500h9v6h-9zM7.500 7.500v2M5 9.500h5M.5 1v3h2M1.500 4v5" /></svg>
        <Volume2 className="ml-1 size-3" strokeWidth={1.500} />
        <span className="ml-2">РУС</span>
        <span className="ml-2">13:31</span>
      </div>
    </div>
  );
}

function Ok() {
  return <svg viewBox="0 0 10 10" className="size-2.5"><circle cx="5" cy="5" r="5" fill="#8fd08c" /><path d="M2.600 5l1.800 1.800 3-3.500" stroke="#1c3a1c" strokeWidth="1.300" fill="none" /></svg>;
}

function Cross() {
  return <svg viewBox="0 0 10 10" className="size-2.5"><path d="M1 1l8 8M9 1L1 9" stroke="#e06a6a" strokeWidth="1.200" /></svg>;
}

function Toolbar() {
  return (
    <div className="flex h-[23px] shrink-0 items-center justify-between border-b-2 border-[#343436] bg-[#232323] pr-1.5 pl-[7px] font-['Roboto','Open_Sans',sans-serif] text-[9px] leading-none text-[#d8d8d8]">
      <div className="flex items-center gap-[11px]">
        <button type="button" aria-label="Главная"><svg viewBox="0 0 11 12" className="h-3 w-[11px]"><path d="M0 2.500h3.500l1 2.500L8 .5h3L5.500 12z" fill="#2fd9a0" /></svg></button>
        <button type="button" aria-label="Добавить"><svg viewBox="0 0 10 10" className="size-2.5"><circle cx="5" cy="5" r="5" fill="#a9dca2" /><path d="M5 2.300v5.400M2.300 5h5.400" stroke="#1d2b1c" strokeWidth="1.500" /></svg></button>
        <button type="button" aria-label="Таблица"><svg viewBox="0 0 12 12" className="size-3"><path d="M0 1h12v3.500H0z" fill="#4f93d6" /><path d="M0 5.300h3.300v1.500H0zM4.300 5.300h3.300v1.500H4.300zM8.600 5.300H12v1.500H8.600zM0 7.700h3.300v1.500H0zM4.300 7.700h3.300v1.500H4.300zM8.600 7.700H12v1.500H8.600zM0 10h3.300v1.500H0zM4.300 10h3.300v1.500H4.300zM8.600 10H12v1.500H8.600z" fill="#8f9aa6" /></svg></button>
        <button type="button" aria-label="Настройки"><Settings className="size-[11px] text-[#7db4e6]" strokeWidth={3.500} /></button>
        <button type="button" aria-label="Справка"><svg viewBox="0 0 11 11" className="size-[11px]"><circle cx="5.500" cy="5.500" r="5.500" fill="#8fd08c" /><path d="M4 4.300c0-2 3-2 3 0 0 1.200-1.500 1.200-1.500 2.300M5.500 7.600v1.200" stroke="#1c3a1c" strokeWidth="1.200" fill="none" /></svg></button>
      </div>
      <div className="flex items-center">
        <div className="flex gap-3 border-r border-[#3c3c3c] pr-2"><Ok /><Ok /><Ok /></div>
        <button type="button" className="ml-2 flex items-center gap-1"><Cross /><span className="font-medium">Заявок: 3</span></button>
        <button type="button" className="ml-3 flex items-center gap-1"><Cross /><span className="font-medium">Позиций: 2</span></button>
        <time className="ml-2.5 font-medium">13:31:35</time>
        <button type="button" aria-label="Свернуть" className="ml-[18px]"><Minus className="size-2.5" /></button>
        <button type="button" aria-label="Окно" className="ml-4"><Copy className="size-2.5 -scale-x-100" /></button>
        <button type="button" aria-label="Закрыть" className="ml-4"><X className="size-3" /></button>
      </div>
    </div>
  );
}

function BottomBar() {
  return (
    <footer className="flex h-5 shrink-0 items-center bg-[#2b2b2c] font-['Roboto','Open_Sans',sans-serif] text-[9px] leading-none text-[#dcdcdc]">
      <div className="flex h-full items-center gap-2.5 bg-[#252528] pr-2.5 pl-2">
        <button type="button" className="text-[#7fb4dc]">Акции</button>
        <CloseTab name="Акции" />
      </div>
      <button type="button" className="ml-1 px-1">Фьючи(валюта)</button>
      <button type="button" aria-label="Новая вкладка" className="ml-7 font-bold">+</button>
    </footer>
  );
}

export default function App() {
  return (
    <div className="flex h-screen flex-col overflow-hidden bg-[#161818] font-['DejaVu_Sans_Condensed','Noto_Sans',sans-serif]">
      <Taskbar />
      <Toolbar />
      <main className="grid min-h-0 flex-1 grid-cols-[minmax(0,227fr)_minmax(0,224fr)_minmax(0,222fr)_minmax(0,1238fr)] gap-[3px]">
        <div className="grid min-h-0 grid-rows-[minmax(0,241fr)_minmax(0,772fr)] gap-[3px]">
          <ImoexChart />
          <Book book={BOOKS.mtlr} />
        </div>
        <Book book={BOOKS.chmf} />
        <Book book={BOOKS.uwgn} />
        <div className="grid min-h-0 grid-rows-[minmax(0,241fr)_minmax(0,772fr)] gap-[3px]">
          <div className="grid min-h-0 grid-cols-[minmax(0,321fr)_minmax(0,463fr)_minmax(0,448fr)] gap-[3px]">
            <HourChart />
            <FiveChart />
            <SecondChart />
          </div>
          <div className="grid min-h-0 grid-cols-[minmax(0,224fr)_minmax(0,220fr)_minmax(0,222fr)_minmax(0,232fr)_minmax(0,237fr)_minmax(0,88fr)] gap-[3px]">
            <Book book={BOOKS.ivat} />
            <Book book={BOOKS.magn} />
            <Book book={BOOKS.cru6} />
            <Book book={BOOKS.sngsp} />
            <Book book={BOOKS.t} />
            <div className="grid min-h-0 grid-rows-[minmax(0,208fr)_minmax(0,561fr)] gap-[3px]">
              <Quotes rows={TOP_QUOTES} second="Из..." last="О" marked={3} thumb="h-7" />
              <Quotes rows={QUOTES} second="Измен..." last="..." marked={1} filter thumb="h-24" />
            </div>
          </div>
        </div>
      </main>
      <BottomBar />
    </div>
  );
}
